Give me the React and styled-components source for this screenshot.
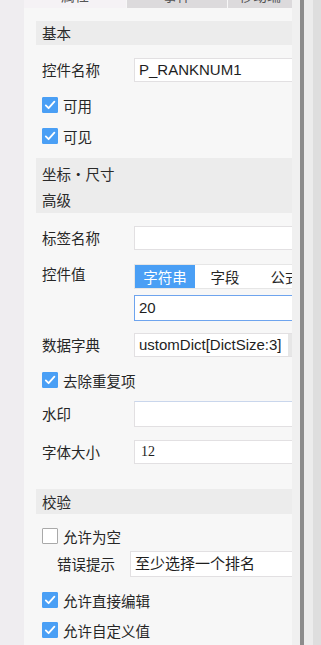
import React from "react";
import styled, { createGlobalStyle } from "styled-components";

const GlobalStyle = createGlobalStyle`
    html, body {
        margin: 0;
        padding: 0;
        background: #efedf0;
    }
    body {
        font-family: "Noto Sans CJK SC", "Noto Sans", sans-serif;
        color: #262626;
    }
`;

const Page = styled.div`
    display: flex;
    width: 321px;
    height: 645px;
    overflow: hidden;
    background: #efedf0;
`;

const LeftStrip = styled.div`
    width: 24px;
    flex: none;
    background: #efedf0;
`;

const Panel = styled.div`
    width: 268px;
    flex: none;
    background: #f7f7f7;
    overflow: hidden;
`;

const Gutter = styled.div`
    width: ${(p) => p.$w}px;
    flex: none;
    background: ${(p) => p.$bg};
`;

const TabBar = styled.div`
    display: flex;
    height: 8px;
    gap: 1px;
    overflow: hidden;
`;

const TopTab = styled.div`
    width: ${(p) => p.$w}px;
    flex: none;
    background: ${(p) => (p.$active ? "#f5f2f5" : "#dcdadc")};
    overflow: hidden;
    text-align: center;
    & span {
        display: block;
        font-size: 14px;
        line-height: 14px;
        margin-top: -12px;
        color: #555;
    }
`;

const Body = styled.div`
    padding-left: 12px;
`;

const SectionHeader = styled.div`
    margin-top: ${(p) => p.$mt}px;
    background: #ececec;
    padding: ${(p) => (p.$multi ? "3px 0 0 6px" : "0 0 0 6px")};
    height: ${(p) => p.$h}px;
    box-sizing: border-box;
    font-size: 14.5px;
    line-height: ${(p) => (p.$multi ? "26px" : `${p.$h}px`)};
    color: #2a2a2a;
`;

const Row = styled.div`
    display: flex;
    align-items: ${(p) => (p.$top ? "flex-start" : "center")};
    margin-top: ${(p) => p.$mt}px;
    padding-left: ${(p) => p.$indent || 6}px;
`;

const Label = styled.div`
    width: ${(p) => p.$w || 92}px;
    flex: none;
    font-size: 14.5px;
    line-height: 18px;
    color: #262626;
    padding-top: ${(p) => p.$pt || 0}px;
`;

const Input = styled.div`
    position: relative;
    width: 200px;
    flex: none;
    height: ${(p) => p.$h || 24}px;
    box-sizing: border-box;
    background: #fff;
    border: 1px solid ${(p) => (p.$focus ? "#6ea4ee" : "#e2e0e2")};
    border-top-color: ${(p) => (p.$focus ? "#6ea4ee" : p.$hl ? "#c9d6ec" : "#e2e0e2")};
    padding-left: ${(p) => p.$pl || 4}px;
    font-family: ${(p) =>
        p.$serif
            ? '"Liberation Serif", "Noto Sans CJK SC", serif'
            : '"Liberation Sans", "Noto Sans CJK SC", sans-serif'};
    font-size: ${(p) => (p.$serif ? "14px" : "15px")};
    line-height: ${(p) => (p.$h || 24) - 2}px;
    color: #1e1e1e;
    white-space: nowrap;
    overflow: hidden;
`;

const DictBox = styled(Input)`
    width: 158px;
    display: flex;
    justify-content: space-between;
    padding-right: 0;
    border-right: none;
`;

const DictEnd = styled.span`
    width: 4px;
    flex: none;
    background: #e6e6e6;
`;

const ValueCol = styled.div`
    display: flex;
    flex-direction: column;
    gap: 6px;
`;

const SegGroup = styled.div`
    display: flex;
    width: 200px;
    height: 25px;
    background: #fff;
    border: 1px solid #e6e6e6;
    box-sizing: border-box;
`;

const Seg = styled.div`
    width: 60px;
    flex: none;
    text-align: center;
    font-size: 14.5px;
    line-height: 23px;
    background: ${(p) => (p.$active ? "#4a9ff5" : "transparent")};
    color: ${(p) => (p.$active ? "#fff" : "#262626")};
`;

const CheckRow = styled.label`
    display: flex;
    align-items: center;
    gap: 5px;
    height: 16px;
    margin-top: ${(p) => p.$mt}px;
    padding-left: 6px;
    font-size: 14.5px;
    color: #262626;
`;

const Box = styled.span`
    width: 16px;
    height: 16px;
    flex: none;
    box-sizing: border-box;
    border-radius: 1px;
    display: flex;
    align-items: center;
    justify-content: center;
    background: ${(p) => (p.$checked ? "#4a9ff5" : "#fff")};
    border: 1px solid ${(p) => (p.$checked ? "#4a9ff5" : "#a9a9a9")};
`;

const Check = ({ checked, children, mt }) => (
    <CheckRow $mt={mt}>
        <Box $checked={checked}>
            {checked && (
                <svg width="12" height="12" viewBox="0 0 12 12">
                    <path
                        d="M1.8 6.4 L4.6 9.2 L10.4 2.6"
                        fill="none"
                        stroke="#fff"
                        strokeWidth="1.8"
                        strokeLinecap="round"
                        strokeLinejoin="round"
                    />
                </svg>
            )}
        </Box>
        {children}
    </CheckRow>
);

const App = () => {
    return (
        <Page>
            <GlobalStyle />
            <LeftStrip />
            <Panel>
                <TabBar>
                    <TopTab $w={102} $active>
                        <span>属性</span>
                    </TopTab>
                    <TopTab $w={100}>
                        <span>事件</span>
                    </TopTab>
                    <TopTab $w={64}>
                        <span>移动端</span>
                    </TopTab>
                </TabBar>
                <Body>
                    <SectionHeader $mt={13} $h={24}>
                        基本
                    </SectionHeader>

                    <Row $mt={13}>
                        <Label>控件名称</Label>
                        <Input>P_RANKNUM1</Input>
                    </Row>
                    <Check checked mt={15}>
                        可用
                    </Check>
                    <Check checked mt={15}>
                        可见
                    </Check>

                    <SectionHeader $mt={14} $h={55} $multi>
                        坐标・尺寸
                        <br />
                        高级
                    </SectionHeader>

                    <Row $mt={13}>
                        <Label>标签名称</Label>
                        <Input />
                    </Row>
                    <Row $mt={14} $top>
                        <Label $pt={1}>控件值</Label>
                        <ValueCol>
                            <SegGroup>
                                <Seg $active>字符串</Seg>
                                <Seg>字段</Seg>
                                <Seg>公式</Seg>
                            </SegGroup>
                            <Input $focus $h={26}>
                                20
                            </Input>
                        </ValueCol>
                    </Row>
                    <Row $mt={12}>
                        <Label>数据字典</Label>
                        <DictBox>
                            <span>ustomDict[DictSize:3]</span>
                            <DictEnd />
                        </DictBox>
                    </Row>
                    <Check checked mt={15}>
                        去除重复项
                    </Check>
                    <Row $mt={13}>
                        <Label>水印</Label>
                        <Input $h={26} $hl />
                    </Row>
                    <Row $mt={13}>
                        <Label>字体大小</Label>
                        <Input $serif $pl={6}>
                            12
                        </Input>
                    </Row>

                    <SectionHeader $mt={25} $h={25}>
                        校验
                    </SectionHeader>

                    <Check mt={14}>允许为空</Check>
                    <Row $mt={7} $indent={21}>
                        <Label $w={73}>错误提示</Label>
                        <Input $h={26}>至少选择一个排名</Input>
                    </Row>
                    <Check checked mt={15}>
                        允许直接编辑
                    </Check>
                    <Check checked mt={14}>
                        允许自定义值
                    </Check>
                </Body>
            </Panel>
            <Gutter $w={8} $bg="#f0f0f0" />
            <Gutter $w={4} $bg="#8c8c8c" />
            <Gutter $w={9} $bg="#ececec" />
            <Gutter $w={8} $bg="#dedede" />
        </Page>
    );
};

export default App;
